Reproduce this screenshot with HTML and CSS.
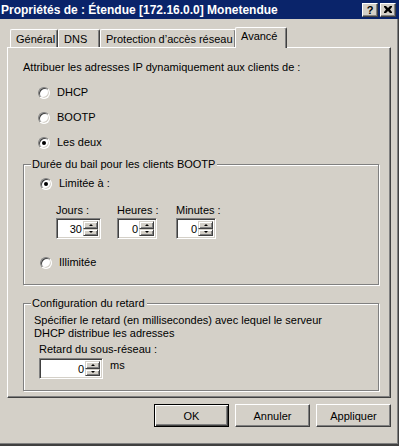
FILE: index.html
```html
<!DOCTYPE html>
<html lang="fr">
<head>
<meta charset="utf-8">
<link rel="stylesheet" href="styles.css">
</head>
<body>
<div class="window">
  <div class="titlebar">
    <span class="title">Propriétés de : Étendue [172.16.0.0] Monetendue</span>
    <div class="caption-btns">
      <span class="cbtn help">?</span>
      <span class="cbtn close"><svg width="8" height="7" viewBox="0 0 8 7"><path d="M0 0h2l2 2 2-2h2v1L6 3.5 8 6v1H6L4 5 2 7H0V6l2-2.5L0 1z" fill="#000"/></svg></span>
    </div>
  </div>
  <div class="client">
    <div class="tabs">
      <div class="tab t1">Général</div>
      <div class="tab t2">DNS</div>
      <div class="tab t3">Protection d’accès réseau</div>
      <div class="tab t4 active">Avancé</div>
    </div>
    <div class="panel">
      <p class="intro">Attribuer les adresses IP dynamiquement aux clients de :</p>
      <div class="radios">
        <div class="radio"><span class="rb"></span><span>DHCP</span></div>
        <div class="radio"><span class="rb"></span><span>BOOTP</span></div>
        <div class="radio"><span class="rb on"></span><span>Les deux</span></div>
      </div>
      <fieldset class="group g1">
        <legend>Durée du bail pour les clients BOOTP</legend>
        <div class="radio"><span class="rb on"></span><span>Limitée à :</span></div>
        <div class="spins">
          <div class="field f1">
            <span class="lbl">Jours :</span>
            <div class="spin w45"><span class="val">30</span><span class="updown"><span class="ud up"></span><span class="ud down"></span></span></div>
          </div>
          <div class="field f2">
            <span class="lbl">Heures :</span>
            <div class="spin w40"><span class="val">0</span><span class="updown"><span class="ud up"></span><span class="ud down"></span></span></div>
          </div>
          <div class="field">
            <span class="lbl">Minutes :</span>
            <div class="spin w40"><span class="val">0</span><span class="updown"><span class="ud up"></span><span class="ud down"></span></span></div>
          </div>
        </div>
        <div class="radio last"><span class="rb"></span><span>Illimitée</span></div>
      </fieldset>
      <fieldset class="group g2">
        <legend>Configuration du retard</legend>
        <p class="desc">Spécifier le retard (en millisecondes) avec lequel le serveur<br>DHCP distribue les adresses</p>
        <div class="sublbl">Retard du sous-réseau :</div>
        <div class="msrow">
          <div class="spin w64"><span class="val">0</span><span class="updown"><span class="ud up"></span><span class="ud down"></span></span></div>
          <span class="ms">ms</span>
        </div>
      </fieldset>
    </div>
    <div class="buttons">
      <div class="btn default"><span>OK</span></div>
      <div class="btn"><span>Annuler</span></div>
      <div class="btn"><span>Appliquer</span></div>
    </div>
  </div>
</div>
</body>
</html>
```
FILE: styles.css
```css
html, body {
  margin: 0;
  padding: 0;
  background: #d4d0c8;
}
body {
  font-family: "Liberation Sans", Arial, sans-serif;
  font-size: 11px;
  color: #000;
}
.window {
  width: 399px;
  height: 446px;
  box-sizing: border-box;
  background: #d4d0c8;
  overflow: hidden;
  border-bottom: 2px solid #404040;
  box-shadow: inset 0 -1px 0 #808080;
  display: flex;
  flex-direction: column;
}
.titlebar {
  height: 19px;
  flex: none;
  background: #0a246a;
  display: flex;
  align-items: center;
  justify-content: space-between;
  padding: 0 3px 0 1px;
}
.title {
  color: #fff;
  font-weight: bold;
  font-size: 12px;
  white-space: nowrap;
}
.caption-btns {
  display: flex;
  gap: 2px;
}
.cbtn {
  width: 16px;
  height: 14px;
  box-sizing: border-box;
  background: #d4d0c8;
  border: 1px solid;
  border-color: #fff #404040 #404040 #fff;
  box-shadow: inset -1px -1px 0 #808080;
  display: flex;
  align-items: center;
  justify-content: center;
  font-weight: bold;
  font-size: 11px;
  line-height: 12px;
}
.client {
  flex: 1;
  display: flex;
  flex-direction: column;
  padding: 8px 7px 0 7px;
  border-right: 1px solid #404040;
  box-shadow: inset -1px 0 0 #808080;
}
.tabs {
  display: flex;
  height: 20px;
  flex: none;
  padding-left: 3px;
  align-items: flex-end;
  position: relative;
  z-index: 1;
}
.tab {
  height: 18px;
  box-sizing: border-box;
  border-top: 1px solid #fff;
  border-left: 1px solid #fff;
  border-right: 1px solid #404040;
  box-shadow: inset -1px 0 0 #808080;
  border-radius: 2px 2px 0 0;
  padding: 2px 0 0 5px;
  white-space: nowrap;
  line-height: 14px;
  background: #d4d0c8;
}
.t1 { width: 48px; }
.t2 { width: 42px; }
.t3 { width: 136px; }
.t4 { width: 52px; }
.tab.active {
  height: 21px;
  margin: 0 -2px -1px -1px;
  padding: 1px 0 0 5px;
}
.panel {
  height: 351px;
  flex: none;
  box-sizing: border-box;
  border: 1px solid;
  border-color: #fff #404040 #404040 #fff;
  box-shadow: inset -1px -1px 0 #808080;
  padding: 13px 11px 0 15px;
}
.intro {
  margin: 0;
  line-height: 13px;
}
.radios {
  display: flex;
  flex-direction: column;
  gap: 12px;
  padding: 12px 0 0 15px;
}
.radio {
  display: flex;
  align-items: center;
  gap: 7px;
  height: 13px;
  line-height: 13px;
}
.rb {
  width: 12px;
  height: 12px;
  flex: none;
  box-sizing: border-box;
  border-radius: 50%;
  background: #fff;
  border: 1px solid;
  border-color: #808080 #fff #fff #808080;
  box-shadow: inset 1px 1px 0 #404040, inset -1px -1px 0 #d4d0c8;
  display: flex;
  align-items: center;
  justify-content: center;
}
.rb.on::after {
  content: "";
  width: 4px;
  height: 4px;
  border-radius: 50%;
  background: #000;
}
.group {
  margin: 0;
  padding: 0;
  border: 1px solid #808080;
  box-shadow: inset 1px 1px 0 #fff, 1px 1px 0 #fff;
  min-width: 0;
  box-sizing: border-box;
}
.group legend {
  padding: 0 2px 0 1px;
  background: #d4d0c8;
  line-height: 13px;
}
.g1 {
  margin-top: 9px;
  height: 127px;
  padding: 6px 0 0 16px;
}
.g1 legend {
  margin-left: -9px;
}
.spins {
  display: flex;
  padding: 14px 0 0 16px;
}
.field {
  display: flex;
  flex-direction: column;
  gap: 1px;
}
.f1 { width: 61px; }
.f2 { width: 59px; }
.lbl {
  line-height: 13px;
}
.radio.last {
  margin-top: 17px;
}
.spin {
  height: 21px;
  box-sizing: border-box;
  background: #fff;
  border: 1px solid;
  border-color: #808080 #fff #fff #808080;
  box-shadow: inset 1px 1px 0 #404040, inset -1px -1px 0 #d4d0c8;
  padding: 2px;
  display: flex;
}
.w45 { width: 45px; }
.w40 { width: 40px; }
.w64 { width: 64px; }
.val {
  flex: 1;
  text-align: right;
  line-height: 16px;
  padding-right: 1px;
}
.updown {
  width: 15px;
  display: flex;
  flex-direction: column;
}
.ud {
  flex: 1;
  box-sizing: border-box;
  background: #d4d0c8;
  border: 1px solid;
  border-color: #d4d0c8 #404040 #404040 #d4d0c8;
  box-shadow: inset 1px 1px 0 #fff, inset -1px -1px 0 #808080;
  display: flex;
  align-items: center;
  justify-content: center;
}
.ud::after {
  content: "";
  width: 0;
  height: 0;
  border-left: 2px solid transparent;
  border-right: 2px solid transparent;
}
.ud.up::after { border-bottom: 2px solid #000; }
.ud.down::after { border-top: 2px solid #000; }
.g2 {
  margin-top: 12px;
  height: 94px;
  padding: 4px 0 0 10px;
}
.g2 legend {
  margin-left: -3px;
}
.desc {
  margin: 0;
  line-height: 13px;
}
.sublbl {
  margin: 3px 0 0 5px;
  line-height: 13px;
}
.msrow {
  display: flex;
  align-items: flex-start;
  gap: 7px;
  margin: 2px 0 0 5px;
}
.ms {
  line-height: 13px;
  padding-top: 1px;
}
.buttons {
  display: flex;
  justify-content: flex-end;
  gap: 6px;
  padding: 6px 0 0 0;
}
.btn {
  width: 75px;
  height: 23px;
  box-sizing: border-box;
  border: 1px solid;
  border-color: #fff #404040 #404040 #fff;
  box-shadow: inset -1px -1px 0 #808080;
  display: flex;
  align-items: center;
  justify-content: center;
}
.btn.default {
  border: 1px solid #000;
  box-shadow: inset 1px 1px 0 #fff, inset -1px -1px 0 #404040, inset -2px -2px 0 #808080;
}
```
